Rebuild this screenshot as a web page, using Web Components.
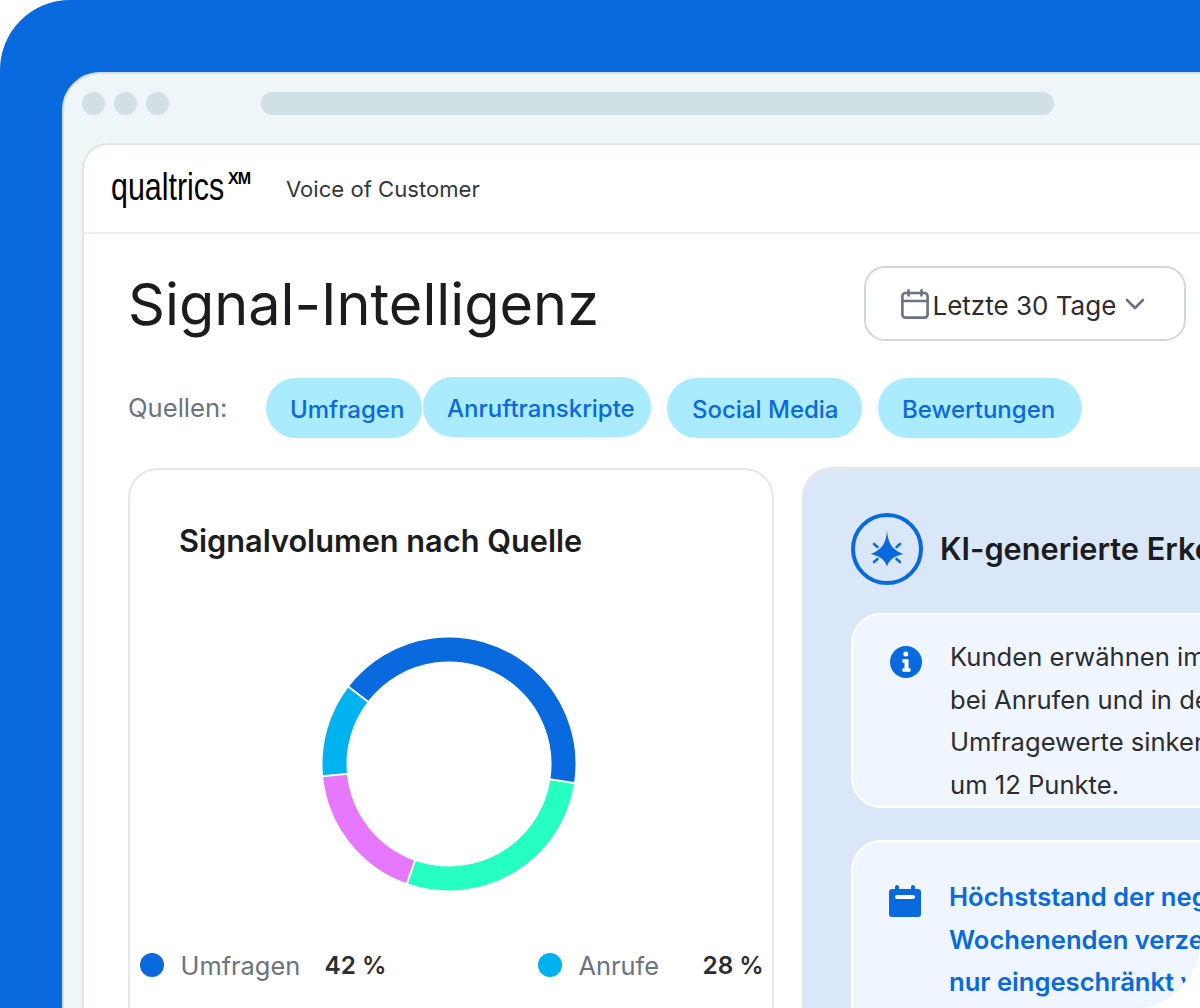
<!DOCTYPE html>
<html lang="de">
<head>
<meta charset="utf-8">
<title>Signal-Intelligenz</title>
<style>
  html, body { margin: 0; background: #fff; }
  body { font-family: Inter, "Liberation Sans", sans-serif; color: #1f2126; }
</style>
</head>
<body>
<vc-stage>
  <vc-browser>
    <vc-header slot="header" product="Voice of Customer"></vc-header>
    <vc-toolbar heading="Signal-Intelligenz" range="Letzte 30 Tage"></vc-toolbar>
    <vc-sources></vc-sources>
    <div style="display:flex;gap:28px;align-items:flex-start;margin-left:44px">
      <vc-volume-card></vc-volume-card>
      <vc-insights>
        <vc-insight icon="info">Kunden erwähnen immer<br>bei Anrufen und in den<br>Umfragewerte sinken<br>um 12 Punkte.</vc-insight>
        <vc-insight icon="calendar" accent>Höchststand der negativen<br>Wochenenden verzeichnet<br>nur eingeschränkt verfügbar</vc-insight>
      </vc-insights>
    </div>
  </vc-browser>
</vc-stage>

<script>
class VcStage extends HTMLElement {
    constructor() {
        super();
        this.shadow = this.attachShadow({ mode: 'open' });
        this.shadow.innerHTML = `
        <style>
            :host {
                display: block;
                width: 1200px;
                height: 1008px;
                overflow: hidden;
                background: #0969de;
                border-radius: 70px 0 70px 0;
                padding: 72px 0 0 62px;
                box-sizing: border-box;
            }
        </style>
        <slot></slot>`;
    }
}

class VcBrowser extends HTMLElement {
    constructor() {
        super();
        this.shadow = this.attachShadow({ mode: 'open' });
        this.shadow.innerHTML = `
        <style>
            :host {
                display: block;
                width: 1300px;
                height: 1100px;
                box-sizing: border-box;
                background: #eff6f8;
                border: 2px solid #d5e0e6;
                border-radius: 38px 0 0 0;
            }
            .chrome {
                display: flex;
                align-items: center;
                height: 69px;
                padding: 0 0 10px 18px;
                box-sizing: border-box;
            }
            .dot {
                width: 23px;
                height: 23px;
                border-radius: 50%;
                background: #d1e0e5;
                margin-right: 9px;
            }
            .url {
                width: 793px;
                height: 23px;
                border-radius: 12px;
                background: #d1e0e5;
                margin-left: 83px;
            }
            .app {
                margin-left: 18px;
                height: 1000px;
                background: #fff;
                border: 2px solid #dfe5e8;
                border-right: 0;
                border-radius: 26px 0 0 0;
            }
        </style>
        <div class="chrome">
            <span class="dot"></span><span class="dot"></span><span class="dot"></span>
            <span class="url"></span>
        </div>
        <div class="app">
            <slot name="header"></slot>
            <slot></slot>
        </div>`;
    }
}

class VcHeader extends HTMLElement {
    constructor() {
        super();
        this.shadow = this.attachShadow({ mode: 'open' });
    }

    connectedCallback() {
        this.shadow.innerHTML = `
        <style>
            :host {
                display: flex;
                align-items: center;
                height: 87px;
                padding-left: 27px;
                border-bottom: 2px solid #eceef0;
            }
            .logo {
                display: block;
                width: 175px;
                height: 44px;
                position: relative;
                font-family: "Liberation Sans", sans-serif;
                color: #000;
            }
            .word {
                position: absolute;
                left: 0;
                top: -2px;
                font-size: 38px;
                line-height: 44px;
                transform: scaleX(.8);
                transform-origin: 0 0;
            }
            .mark {
                position: absolute;
                left: 117px;
                top: 4px;
                font-size: 16px;
                line-height: 16px;
                font-weight: 700;
                letter-spacing: -1px;
            }
            .product {
                font-size: 22.1px;
                color: #32363c;
            }
        </style>
        <span class="logo"><span class="word">qualtrics</span><span class="mark">XM</span></span>
        <span class="product">${this.getAttribute('product')}</span>`;
    }
}

class VcToolbar extends HTMLElement {
    constructor() {
        super();
        this.shadow = this.attachShadow({ mode: 'open' });
    }

    connectedCallback() {
        this.shadow.innerHTML = `
        <style>
            :host {
                display: flex;
                align-items: center;
                justify-content: space-between;
                height: 107px;
                width: 1102px;
                padding: 32px 0 0 44px;
                box-sizing: border-box;
            }
            h1 {
                margin: 0;
                font-size: 57.6px;
                font-weight: 400;
                color: #1b1c20;
                line-height: 72px;
            }
            button {
                display: flex;
                align-items: center;
                width: 322px;
                height: 75px;
                padding: 0 0 0 35px;
                box-sizing: border-box;
                background: #fff;
                border: 2px solid #d5d8db;
                border-radius: 21px;
                font: inherit;
                font-size: 26px;
                color: #2b2d31;
            }
            svg { display: block; flex: none; }
            .cal { margin-right: 3.5px; }
            .chev { margin-left: 9px; }
            .range { padding-top: 3px; }
        </style>
        <h1>${this.getAttribute('heading')}</h1>
        <button>
            <svg class="cal" width="28" height="30" viewBox="0 0 28 30" fill="none" stroke="#6b7280" stroke-width="2.6" stroke-linecap="round" stroke-linejoin="round"><rect x="1.4" y="4" width="25.2" height="24.6" rx="3"/><path d="M1.4 12h25.2M7.5 1.4v5M20.5 1.4v5"/></svg>
            <span class="range">${this.getAttribute('range')}</span>
            <svg class="chev" width="20" height="12" viewBox="0 0 20 12" fill="none" stroke="#6b7280" stroke-width="2.6" stroke-linecap="round" stroke-linejoin="round"><path d="M2 2l8 8 8-8"/></svg>
        </button>`;
    }
}

class VcSources extends HTMLElement {
    constructor() {
        super();
        this.shadow = this.attachShadow({ mode: 'open' });
        this.shadow.innerHTML = `
        <style>
            :host {
                display: flex;
                align-items: center;
                gap: 16px;
                height: 60px;
                margin: 37px 0 30px 44px;
                font-size: 24px;
            }
            .label { color: #6b7280; width: 122px; font-size: 25.6px; line-height: 62px; }
            .chip {
                height: 60px;
                line-height: 63px;
                padding-left: 24px;
                box-sizing: border-box;
                border-radius: 30px;
                background: #abebff;
                color: #0969de;
                font-weight: 500;
                white-space: nowrap;
            }
            .tight { margin-left: -15px; position: relative; top: -1px; }
        </style>
        <span class="label">Quellen:</span>
        <span class="chip" style="width:156px">Umfragen</span>
        <span class="chip tight" style="width:228px">Anruftranskripte</span>
        <span class="chip" style="width:195px;padding-left:25px">Social Media</span>
        <span class="chip" style="width:204px">Bewertungen</span>`;
    }
}

class VcVolumeCard extends HTMLElement {
    constructor() {
        super();
        this.shadow = this.attachShadow({ mode: 'open' });
        this.shadow.innerHTML = `
        <style>
            :host {
                display: block;
                flex: none;
                width: 646px;
                height: 640px;
                box-sizing: border-box;
                background: #fff;
                border: 2px solid #e5e7eb;
                border-radius: 30px;
            }
            h2 {
                margin: 48px 0 0 49px;
                font-size: 30.72px;
                line-height: 46px;
                font-weight: 600;
                color: #1b1c20;
            }
            svg { display: block; margin: 70px 0 0 189px; }
            .legend {
                display: grid;
                grid-template-columns: 398px 1fr;
                margin: 51px 0 0 10px;
                font-size: 25.4px;
            }
            .row { display: flex; align-items: center; height: 40px; }
            .dot { width: 24px; height: 24px; border-radius: 50%; margin-right: 16.5px; flex: none; }
            .name { color: #6b7280; }
            .row.first .name { width: 144px; }
            .row.second .name { width: 124px; }
            b { font-size: 24.3px; font-weight: 600; color: #2b2d31; }
        </style>
        <h2>Signalvolumen nach Quelle</h2>
        <svg width="260" height="260" viewBox="0 0 260 260" fill="none" stroke-width="24">
            <g transform="rotate(-90 130 130)">
                <circle cx="130" cy="130" r="114.5" pathLength="360" stroke="#0969de" stroke-dasharray="151 209" transform="rotate(307.6 130 130)"/>
                <circle cx="130" cy="130" r="114.5" pathLength="360" stroke="#25ffc2" stroke-dasharray="100.8 259.2" transform="rotate(98.6 130 130)"/>
                <circle cx="130" cy="130" r="114.5" pathLength="360" stroke="#e578ff" stroke-dasharray="65.1 294.9" transform="rotate(199.4 130 130)"/>
                <circle cx="130" cy="130" r="114.5" pathLength="360" stroke="#00b3f0" stroke-dasharray="43.1 316.9" transform="rotate(264.5 130 130)"/>
            </g>
            <g stroke="#fff" stroke-width="2">
                <path d="M130 130 L130 0" transform="rotate(307.6 130 130)"/>
                <path d="M130 130 L130 0" transform="rotate(98.6 130 130)"/>
                <path d="M130 130 L130 0" transform="rotate(199.4 130 130)"/>
                <path d="M130 130 L130 0" transform="rotate(264.5 130 130)"/>
            </g>
            <circle cx="130" cy="130" r="102" fill="#fff" stroke="none"/>
        </svg>
        <div class="legend">
            <div class="row first"><span class="dot" style="background:#0969de"></span><span class="name">Umfragen</span><b>42 %</b></div>
            <div class="row second"><span class="dot" style="background:#00b3f0"></span><span class="name">Anrufe</span><b>28 %</b></div>
        </div>`;
    }
}

class VcInsights extends HTMLElement {
    constructor() {
        super();
        this.shadow = this.attachShadow({ mode: 'open' });
        this.shadow.innerHTML = `
        <style>
            :host {
                display: block;
                width: 600px;
                height: 640px;
                margin-top: -1px;
                box-sizing: border-box;
                background: #dae7f8;
                border: 2px solid #e5e7eb;
                border-right: 0;
                border-bottom: 0;
                border-radius: 30px 0 0 0;
                padding: 44px 0 0 47px;
            }
            .head { display: flex; align-items: center; gap: 17px; margin-bottom: 28px; }
            svg { display: block; flex: none; }
            h2 {
                margin: 0;
                padding-bottom: 2px;
                font-size: 30.72px;
                font-weight: 600;
                color: #1b1c20;
                white-space: nowrap;
            }
            .list { display: flex; flex-direction: column; gap: 32px; }
        </style>
        <div class="head">
            <svg width="72" height="72" viewBox="0 0 72 72" fill="none">
                <circle cx="36" cy="36" r="34" stroke="#0969de" stroke-width="4"/>
                <path d="M36 17C36.500 28 40 37 52.500 41C43 43 38 47 36 53.500C34 47 29 43 19.500 41C32 37 35.500 28 36 17z" fill="#0969de"/>
                <path d="M23 31l3.500 3M49 31l-3.500 3M23 49l3.500-3M49 49l-3.500-3" stroke="#0969de" stroke-width="2.600" stroke-linecap="round"/>
            </svg>
            <h2>KI-generierte Erkenntnisse</h2>
        </div>
        <div class="list"><slot></slot></div>`;
    }
}

class VcInsight extends HTMLElement {
    constructor() {
        super();
        this.shadow = this.attachShadow({ mode: 'open' });
    }

    connectedCallback() {
        const accent = this.hasAttribute('accent');
        const icons = {
            info: `<svg width="32" height="32" viewBox="0 0 32 32"><circle cx="16" cy="16" r="16" fill="#0969de"/><circle cx="15.800" cy="8" r="2.500" fill="#fff"/><path d="M12.800 13.500h5.400v9h2v2.900h-7.400v-2.900h2v-6.100h-2z" fill="#fff" stroke="#fff" stroke-width=".6" stroke-linejoin="round"/></svg>`,
            calendar: `<svg width="32" height="32" viewBox="0 0 32 32"><path d="M8 0a2 2 0 0 1 2 2v2h12V2a2 2 0 0 1 4 0v2h3a3 3 0 0 1 3 3v22a3 3 0 0 1-3 3H3a3 3 0 0 1-3-3V7a3 3 0 0 1 3-3h3V2a2 2 0 0 1 2-2z" fill="#0969de"/><rect x="6" y="10" width="20" height="4" rx="2" fill="#fff"/></svg>`
        };
        this.shadow.innerHTML = `
        <style>
            :host {
                display: flex;
                gap: 28px;
                box-sizing: border-box;
                height: ${accent ? 300 : 195}px;
                padding: ${accent ? '34px 0 0 36px' : '21px 0 0 37px'};
                background: #eff6ff;
                border: 2px solid #fff;
                border-right: 0;
                border-radius: 30px 0 0 30px;
                font-size: 25.6px;
                line-height: 42.67px;
                color: ${accent ? '#0969de' : '#2b2d31'};
                font-weight: ${accent ? 600 : 400};
                white-space: nowrap;
            }
            svg { display: block; flex: none; margin-top: ${accent ? '9px' : '10px'}; }
        </style>
        ${icons[this.getAttribute('icon')]}
        <div><slot></slot></div>`;
    }
}

customElements.define('vc-stage', VcStage);
customElements.define('vc-browser', VcBrowser);
customElements.define('vc-header', VcHeader);
customElements.define('vc-toolbar', VcToolbar);
customElements.define('vc-sources', VcSources);
customElements.define('vc-volume-card', VcVolumeCard);
customElements.define('vc-insights', VcInsights);
customElements.define('vc-insight', VcInsight);
</script>
</body>
</html>
